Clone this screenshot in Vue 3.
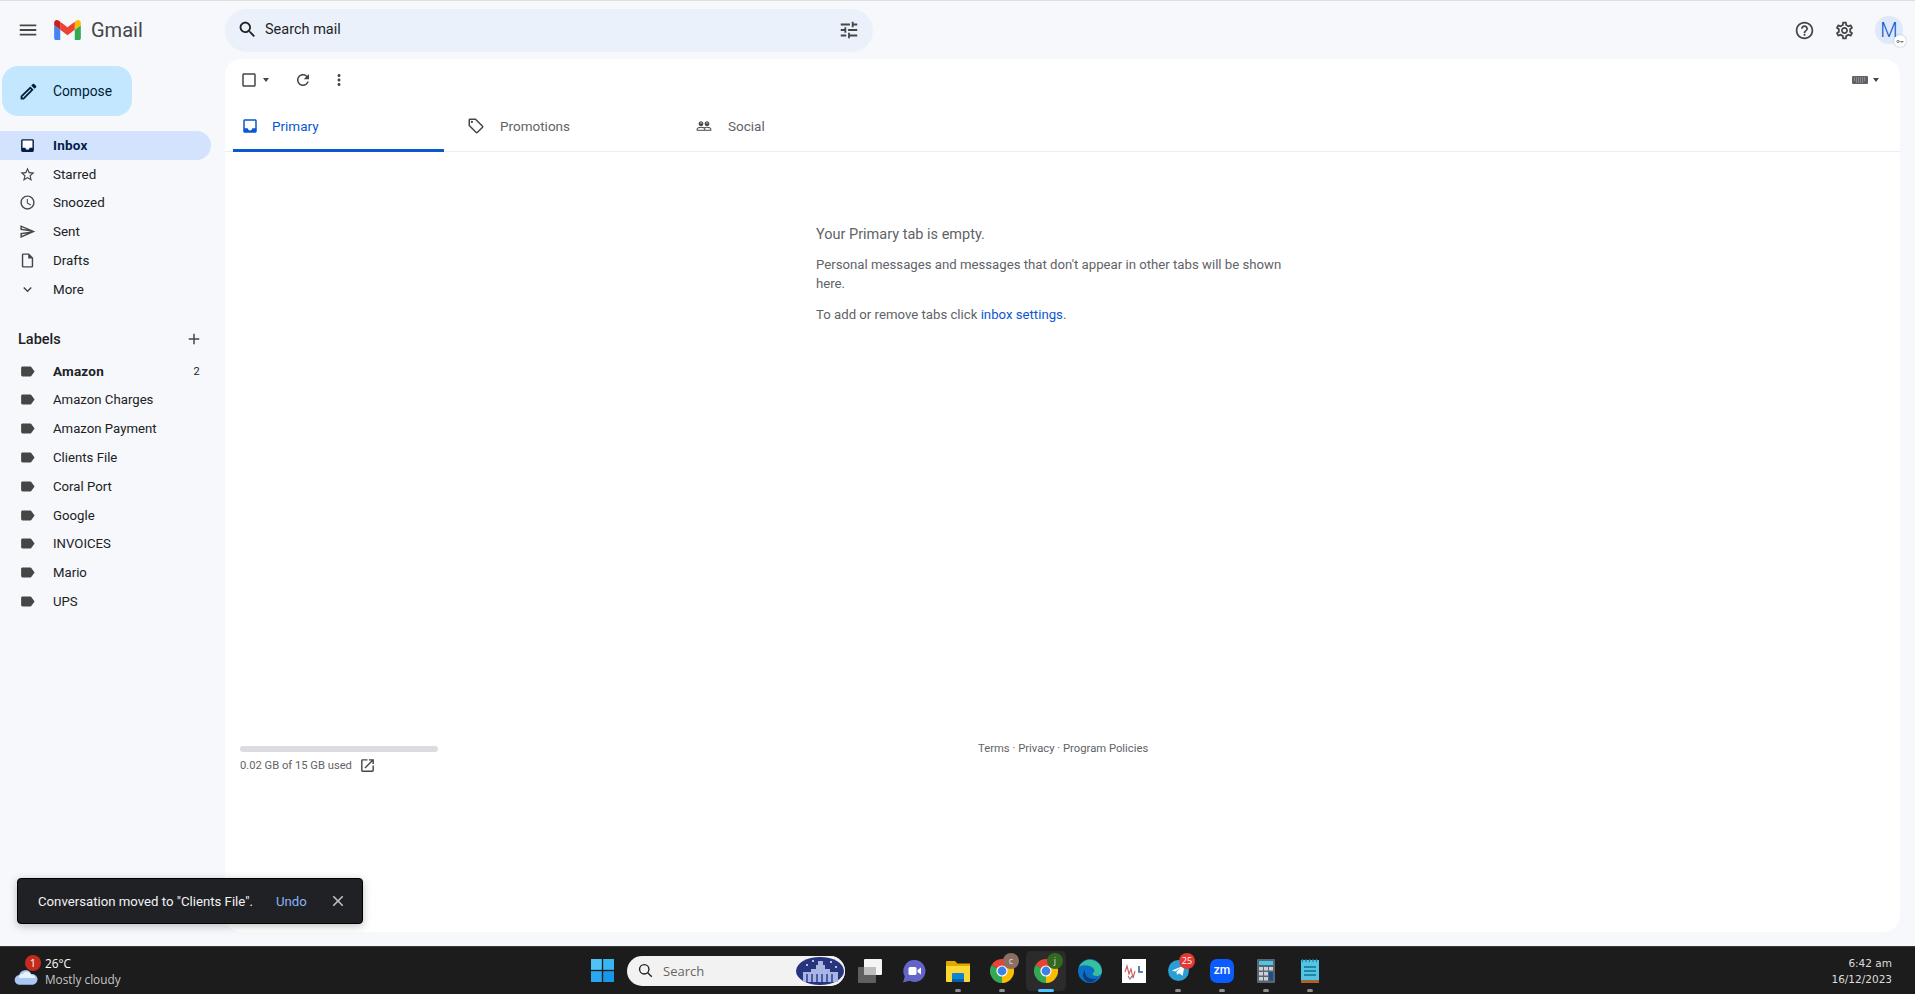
<template>
  <div class="page">
    <header class="topbar">
      <div class="brand">
        <svg class="menu-icon" viewBox="0 0 24 24"><path :d="icons.menu" /></svg>
        <svg class="logo" viewBox="52 42 88 66">
          <path fill="#4285f4" d="M58 108h14V74L52 59v43c0 3.32 2.69 6 6 6" />
          <path fill="#34a853" d="M120 108h14c3.32 0 6-2.69 6-6V59l-20 15" />
          <path fill="#fbbc04" d="M120 48v26l20-15v-8c0-7.42-8.47-11.65-14.4-7.2" />
          <path fill="#ea4335" d="M72 74V48l24 18 24-18v26L96 92" />
          <path fill="#c5221f" d="M52 51v8l20 15V48l-5.6-4.2c-5.94-4.45-14.4-.22-14.4 7.2" />
        </svg>
        <span class="wordmark">Gmail</span>
      </div>
      <div class="search">
        <svg class="search-icon" viewBox="0 0 24 24"><path :d="icons.search" /></svg>
        <span class="search-text">Search mail</span>
        <svg class="tune-icon" viewBox="0 0 24 24"><path :d="icons.tune" /></svg>
      </div>
      <div class="top-actions">
        <svg class="action-icon" viewBox="0 0 24 24"><path :d="icons.help" /></svg>
        <svg class="action-icon" viewBox="0 0 24 24"><path :d="icons.settings" /></svg>
        <div class="avatar">
          M
          <span class="key-badge">
            <svg viewBox="0 0 16 8"><circle cx="3.5" cy="4" r="2" fill="none" stroke="#444" stroke-width="1.2" /><path d="M5.5 3.4h8v1.2h-1v1.4h-1V4.6h-1V6h-1V4.6h-4z" fill="#444" /></svg>
          </span>
        </div>
      </div>
    </header>

    <div class="body">
      <aside class="sidebar">
        <button class="compose">
          <svg viewBox="0 0 24 24"><path :d="icons.edit" /></svg>
          <span>Compose</span>
        </button>
        <nav class="nav">
          <div v-for="item in navItems" :key="item.name" class="row" :class="{ active: item.active }">
            <svg class="row-icon" viewBox="0 0 24 24">
              <rect v-if="item.active" x="4" y="4" width="16" height="12" fill="#fff" />
              <path :d="icons[item.icon]" />
            </svg>
            <span>{{ item.name }}</span>
          </div>
        </nav>
        <div class="labels-head">
          <span>Labels</span>
          <svg viewBox="0 0 24 24"><path :d="icons.add" /></svg>
        </div>
        <div v-for="label in labels" :key="label.name" class="row label-row" :class="{ unread: label.count }">
          <svg class="row-icon" viewBox="0 0 24 24"><path :d="icons.label" /></svg>
          <span>{{ label.name }}</span>
          <span v-if="label.count" class="count">{{ label.count }}</span>
        </div>
      </aside>

      <main class="panel">
        <div class="toolbar">
          <svg class="tool-box" viewBox="0 0 24 24"><path :d="icons.checkbox" /></svg>
          <span class="caret"></span>
          <svg class="tool-refresh" viewBox="0 0 24 24"><path :d="icons.refresh" /></svg>
          <svg class="tool-more" viewBox="0 0 24 24"><path :d="icons.more" /></svg>
          <div class="input-tools">
            <svg class="keyboard" viewBox="0 0 16 8">
              <rect width="16" height="8" rx="1" fill="#5f6368" />
              <path d="M2 2h12M2 4h12M4 6h8" stroke="#c8c8c8" stroke-width=".8" stroke-dasharray="1 1" />
            </svg>
            <span class="caret"></span>
          </div>
        </div>

        <div class="tabs">
          <div class="tab tab-primary">
            <svg viewBox="0 0 24 24">
              <rect x="4" y="4" width="16" height="12" fill="#fff" />
              <path :d="icons.inbox" />
            </svg>
            <span>Primary</span>
          </div>
          <div class="tab tab-promo">
            <svg viewBox="0 0 24 24"><path :d="icons.tag" /></svg>
            <span>Promotions</span>
          </div>
          <div class="tab tab-social">
            <svg viewBox="0 0 24 24"><path :d="icons.people" /></svg>
            <span>Social</span>
          </div>
        </div>

        <section class="empty">
          <p class="empty-title">Your Primary tab is empty.</p>
          <p class="empty-desc">Personal messages and messages that don't appear in other tabs will be shown here.</p>
          <p class="empty-desc">To add or remove tabs click <a>inbox settings</a>.</p>
        </section>

        <footer class="panel-foot">
          <div class="storage">
            <div class="storage-bar"></div>
            <div class="storage-text">
              <span>0.02 GB of 15 GB used</span>
              <svg viewBox="0 0 24 24"><path :d="icons.open" /></svg>
            </div>
          </div>
          <div class="terms">Terms · Privacy · Program Policies</div>
        </footer>
      </main>
    </div>

    <footer class="taskbar">
      <div class="weather">
        <svg class="cloud" viewBox="0 0 26 20">
          <path fill="#a9c8f2" d="M6 19a5 5 0 0 1-.6-10 6.5 6.5 0 0 1 12.4-1A5.5 5.5 0 0 1 20 19z" />
          <path fill="#eaf2fd" d="M5 12a4 4 0 0 1 4-4 5 5 0 0 1 9 1c3 0 4 2 4 3z" />
        </svg>
        <span class="weather-badge">1</span>
        <div class="weather-text">
          <div class="temp">26°C</div>
          <div class="cond">Mostly cloudy</div>
        </div>
      </div>

      <div class="slot">
        <svg class="win" viewBox="0 0 24 24">
          <rect width="11.3" height="11.3" fill="#4fc3f7" />
          <rect x="12.7" width="11.3" height="11.3" fill="#38b6f4" />
          <rect y="12.7" width="11.3" height="11.3" fill="#29a8ef" />
          <rect x="12.7" y="12.7" width="11.3" height="11.3" fill="#1a96e8" />
        </svg>
      </div>

      <div class="task-search">
        <svg viewBox="0 0 24 24" fill="none" stroke="#222" stroke-width="2.2"><circle cx="10" cy="10" r="7.5" /><path d="M15.5 15.5L22 22" /></svg>
        <span>Search</span>
        <svg class="palace" viewBox="0 0 50 30">
          <rect width="50" height="30" rx="15" fill="#f2f2f2" />
          <ellipse cx="25" cy="15" rx="24" ry="14" fill="#27357e" />
          <path fill="#aab6e2" d="M8 26V16h8v-3h5V9h2V5h5v4h2v4h5v3h8v10z" />
          <path fill="#4a5bab" d="M11 18h2v8h-2zm5 0h2v8h-2zm5 0h2v8h-2zm5 0h2v8h-2zm5 0h2v8h-2zm5 0h2v8h-2z" />
          <g fill="#fff"><circle cx="12" cy="9" r=".9" /><circle cx="18" cy="5" r=".9" /><circle cx="36" cy="6" r=".9" /><circle cx="41" cy="11" r=".9" /></g>
        </svg>
      </div>

      <div class="slot">
        <svg class="tb-icon" viewBox="0 0 24 24">
          <rect y="8" width="18" height="16" rx="1" fill="#5f5f5f" />
          <rect x="6" width="18" height="16" rx="1" fill="#f4f4f4" />
          <rect x="6" y="8" width="12" height="8" fill="#bdbdbd" />
        </svg>
      </div>
      <div class="slot">
        <svg class="tb-icon" viewBox="0 0 24 24">
          <path fill="#6264c7" d="M12.5 1a11 11 0 1 1-5 20.8L1 23.5l1.8-6A11 11 0 0 1 12.5 1z" />
          <rect x="6.5" y="8" width="8" height="8" rx="1.5" fill="#fff" />
          <path fill="#fff" d="M15.5 11l3.5-2.5v7L15.5 13z" />
        </svg>
      </div>
      <div class="slot">
        <svg class="tb-icon" viewBox="0 0 24 24">
          <path fill="#e0a800" d="M0 3a1 1 0 0 1 1-1h8l2.5 2.5H24V9H0z" />
          <path fill="#fdd835" d="M0 7h24v15a1 1 0 0 1-1 1H1a1 1 0 0 1-1-1z" />
          <rect x="6" y="14" width="12" height="7" rx="1" fill="#0b84d8" />
          <rect x="6" y="20" width="12" height="3" fill="#0a5ea8" />
        </svg>
        <span class="run"></span>
      </div>
      <div class="slot">
        <svg class="tb-icon" viewBox="0 0 24 24">
          <path fill="#ea4335" d="M12 12L1.6 6A12 12 0 0 1 22.4 6z" />
          <path fill="#fbbc04" d="M12 12L22.4 6A12 12 0 0 1 12 24z" />
          <path fill="#34a853" d="M12 12L12 24A12 12 0 0 1 1.6 6z" />
          <circle cx="12" cy="12" r="5.6" fill="#fff" />
          <circle cx="12" cy="12" r="4.4" fill="#3f7fe8" />
        </svg>
        <span class="avatar-dot brown">c</span>
        <span class="run"></span>
      </div>
      <div class="slot current">
        <svg class="tb-icon" viewBox="0 0 24 24">
          <path fill="#ea4335" d="M12 12L1.6 6A12 12 0 0 1 22.4 6z" />
          <path fill="#fbbc04" d="M12 12L22.4 6A12 12 0 0 1 12 24z" />
          <path fill="#34a853" d="M12 12L12 24A12 12 0 0 1 1.6 6z" />
          <circle cx="12" cy="12" r="5.6" fill="#fff" />
          <circle cx="12" cy="12" r="4.4" fill="#3f7fe8" />
        </svg>
        <span class="avatar-dot green">j</span>
        <span class="run run-active"></span>
      </div>
      <div class="slot">
        <svg class="tb-icon" viewBox="0 0 24 24">
          <circle cx="12" cy="12" r="12" fill="#0b6fc2" />
          <path fill="#35c1a0" d="M1 8A12 12 0 0 1 24 12c0 3-2.5 5-5.5 5-2.5 0-4-1-4-2.5 2-1 2.5-3 1-5C13.5 7 6 4.5 1 8z" />
          <path fill="#0a3d80" d="M10 23C5 21 3.5 15 7 11c-1 5 3 9 8 9 2 0 3-.5 4-1-2 3-5 5-9 4z" />
        </svg>
      </div>
      <div class="slot">
        <svg class="tb-icon" viewBox="0 0 24 24">
          <rect width="24" height="24" fill="#fff" />
          <path d="M3 13l2-6 2 8 2-5 2 9 2-7" fill="none" stroke="#c9585a" stroke-width="1.1" />
          <path d="M6 17l2 3 2-3" fill="none" stroke="#777" stroke-width="1.1" />
          <path d="M17 7v6h4" fill="none" stroke="#2f5fa8" stroke-width="1.6" />
        </svg>
      </div>
      <div class="slot">
        <svg class="tb-icon tele" viewBox="0 0 24 24">
          <circle cx="12" cy="12" r="12" fill="#2a9fd6" />
          <path fill="#fff" d="M4.5 12L19 6l-2.3 12-4.2-3-2.2 2.2-.6-3.7 5.8-5-7.2 4.5z" />
        </svg>
        <span class="avatar-dot red">25</span>
        <span class="run"></span>
      </div>
      <div class="slot">
        <div class="zoom-app">zm</div>
        <span class="run"></span>
      </div>
      <div class="slot">
        <svg class="tb-icon narrow" viewBox="0 0 18 24">
          <rect width="18" height="24" rx="1" fill="#5a6570" />
          <rect x="2" y="2" width="14" height="4" fill="#49c6e8" />
          <g fill="#c8d0d8">
            <rect x="2" y="8" width="4" height="3.5" /><rect x="7" y="8" width="4" height="3.5" /><rect x="12" y="8" width="4" height="3.5" />
            <rect x="2" y="13" width="4" height="3.5" /><rect x="7" y="13" width="4" height="3.5" />
            <rect x="2" y="18" width="4" height="3.5" /><rect x="7" y="18" width="4" height="3.5" />
          </g>
          <rect x="12" y="13" width="4" height="8.5" fill="#1c4f8f" />
        </svg>
        <span class="run"></span>
      </div>
      <div class="slot">
        <svg class="tb-icon narrow" viewBox="0 0 18 24">
          <rect y="1" width="18" height="21" fill="#55c4e4" />
          <rect y="21" width="18" height="3" fill="#a8642a" />
          <path d="M1.5 0v3M5 0v3M8.5 0v3M12 0v3M15.5 0v3" stroke="#1e7f9e" stroke-width="1.2" />
          <path d="M3 8h12M3 12h12M3 16h12" stroke="#0f7192" stroke-width="1.6" />
        </svg>
        <span class="run"></span>
      </div>

      <div class="clock">
        <div>6:42 am</div>
        <div>16/12/2023</div>
      </div>
    </footer>

    <div class="toast">
      <span class="toast-text">Conversation moved to "Clients File".</span>
      <span class="toast-undo">Undo</span>
      <svg viewBox="0 0 24 24"><path :d="icons.close" /></svg>
    </div>
  </div>
</template>

<script setup>
const icons = {
  menu: 'M3 18h18v-2H3v2zm0-5h18v-2H3v2zm0-7v2h18V6H3z',
  search: 'M15.5 14h-.79l-.28-.27C15.41 12.59 16 11.11 16 9.5 16 5.91 13.09 3 9.5 3S3 5.91 3 9.5 5.91 16 9.5 16c1.61 0 3.09-.59 4.23-1.57l.27.28v.79l5 4.99L20.49 19l-4.99-5zm-6 0C7.01 14 5 11.99 5 9.5S7.01 5 9.5 5 14 7.01 14 9.5 11.99 14 9.5 14z',
  tune: 'M3 17v2h6v-2H3zM3 5v2h10V5H3zm10 16v-2h8v-2h-8v-2h-2v6h2zM7 9v2H3v2h4v2h2V9H7zm14 4v-2H11v2h10zm-6-4h2V7h4V5h-4V3h-2v6z',
  help: 'M11 18h2v-2h-2v2zm1-16C6.48 2 2 6.48 2 12s4.48 10 10 10 10-4.48 10-10S17.52 2 12 2zm0 18c-4.41 0-8-3.59-8-8s3.59-8 8-8 8 3.59 8 8-3.59 8-8 8zm0-14c-2.21 0-4 1.79-4 4h2c0-1.1.9-2 2-2s2 .9 2 2c0 2-3 1.75-3 5h2c0-2.25 3-2.5 3-5 0-2.21-1.79-4-4-4z',
  settings: 'M19.43 12.98c.04-.32.07-.64.07-.98 0-.34-.03-.66-.07-.98l2.11-1.65c.19-.15.24-.42.12-.64l-2-3.46c-.09-.16-.26-.25-.44-.25-.06 0-.12.01-.17.03l-2.49 1c-.52-.4-1.08-.73-1.69-.98l-.38-2.65C14.46 2.18 14.25 2 14 2h-4c-.25 0-.46.18-.49.42l-.38 2.65c-.61.25-1.17.59-1.69.98l-2.49-1c-.06-.02-.12-.03-.18-.03-.17 0-.34.09-.43.25l-2 3.46c-.13.22-.07.49.12.64l2.11 1.65c-.04.32-.07.65-.07.98 0 .33.03.66.07.98l-2.11 1.65c-.19.15-.24.42-.12.64l2 3.46c.09.16.26.25.44.25.06 0 .12-.01.17-.03l2.49-1c.52.4 1.08.73 1.69.98l.38 2.65c.03.24.24.42.49.42h4c.25 0 .46-.18.49-.42l.38-2.65c.61-.25 1.17-.59 1.69-.98l2.49 1c.06.02.12.03.18.03.17 0 .34-.09.43-.25l2-3.46c.12-.22.07-.49-.12-.64l-2.11-1.65zm-1.98-1.71c.04.31.05.52.05.73 0 .21-.02.43-.05.73l-.14 1.13.89.7 1.08.84-.7 1.21-1.27-.51-1.04-.42-.9.68c-.43.32-.84.56-1.25.73l-1.06.43-.16 1.13-.2 1.35h-1.4l-.19-1.35-.16-1.13-1.06-.43c-.43-.18-.83-.41-1.23-.71l-.91-.7-1.06.43-1.27.51-.7-1.21 1.08-.84.89-.7-.14-1.13c-.03-.31-.05-.54-.05-.74s.02-.43.05-.73l.14-1.13-.89-.7-1.08-.84.7-1.21 1.27.51 1.04.42.9-.68c.43-.32.84-.56 1.25-.73l1.06-.43.16-1.13.2-1.35h1.39l.19 1.35.16 1.13 1.06.43c.43.18.83.41 1.23.71l.91.7 1.06-.43 1.27-.51.7 1.21-1.07.85-.89.7.14 1.13zM12 8c-2.21 0-4 1.79-4 4s1.79 4 4 4 4-1.79 4-4-1.79-4-4-4zm0 6c-1.1 0-2-.9-2-2s.9-2 2-2 2 .9 2 2-.9 2-2 2z',
  edit: 'M14.06 9.02l.92.92L5.92 19H5v-.92l9.06-9.06M17.66 3c-.25 0-.51.1-.7.29l-1.83 1.83 3.75 3.75 1.83-1.83c.39-.39.39-1.02 0-1.41l-2.34-2.34c-.2-.2-.45-.29-.71-.29zm-3.6 3.19L3 17.25V21h3.75L17.81 9.94l-3.75-3.75z',
  inbox: 'M19 3H5c-1.1 0-2 .9-2 2v14c0 1.1.9 2 2 2h14c1.1 0 2-.9 2-2V5c0-1.1-.9-2-2-2zm0 12h-4c0 1.66-1.35 3-3 3s-3-1.34-3-3H5V5h14v10z',
  star: 'M22 9.24l-7.19-.62L12 2 9.19 8.63 2 9.24l5.46 4.73L5.82 21 12 17.27 18.18 21l-1.63-7.03L22 9.24zM12 15.4l-3.76 2.27 1-4.28-3.32-2.88 4.38-.38L12 6.1l1.71 4.04 4.38.38-3.32 2.88 1 4.28L12 15.4z',
  clock: 'M11.99 2C6.47 2 2 6.48 2 12s4.47 10 9.99 10C17.52 22 22 17.52 22 12S17.52 2 11.99 2zM12 20c-4.42 0-8-3.58-8-8s3.58-8 8-8 8 3.58 8 8-3.58 8-8 8zm.5-13H11v6l5.25 3.15.75-1.23-4.5-2.67z',
  send: 'M4.01 6.03l7.51 3.22-7.52-1 .01-2.22m7.5 8.72L4 17.97v-2.22l7.51-1M2.01 3L2 10l15 2-15 2 .01 7L23 12 2.01 3z',
  draft: 'M14 2H6c-1.1 0-1.99.9-1.99 2L4 20c0 1.1.89 2 1.99 2H18c1.1 0 2-.9 2-2V8l-6-6zm4 18H6V4h7v5h5v11z',
  expand: 'M16.59 8.59L12 13.17 7.41 8.59 6 10l6 6 6-6z',
  add: 'M19 13h-6v6h-2v-6H5v-2h6V5h2v6h6v2z',
  label: 'M17.63 5.84C17.27 5.33 16.67 5 16 5L5 5.01C3.9 5.01 3 5.9 3 7v10c0 1.1.9 1.99 2 1.99L16 19c.67 0 1.27-.33 1.63-.84L22 12l-4.37-6.16z',
  checkbox: 'M19 5v14H5V5h14m0-2H5c-1.1 0-2 .9-2 2v14c0 1.1.9 2 2 2h14c1.1 0 2-.9 2-2V5c0-1.1-.9-2-2-2z',
  refresh: 'M17.65 6.35C16.2 4.9 14.21 4 12 4c-4.42 0-7.99 3.58-7.99 8s3.57 8 7.99 8c3.73 0 6.84-2.55 7.73-6h-2.08c-.82 2.33-3.04 4-5.65 4-3.31 0-6-2.69-6-6s2.69-6 6-6c1.66 0 3.14.69 4.22 1.78L13 11h7V4l-2.35 2.35z',
  more: 'M12 8c1.1 0 2-.9 2-2s-.9-2-2-2-2 .9-2 2 .9 2 2 2zm0 2c-1.1 0-2 .9-2 2s.9 2 2 2 2-.9 2-2-.9-2-2-2zm0 6c-1.1 0-2 .9-2 2s.9 2 2 2 2-.9 2-2-.9-2-2-2z',
  tag: 'M21.41 11.58l-9-9C12.05 2.22 11.55 2 11 2H4c-1.1 0-2 .9-2 2v7c0 .55.22 1.05.59 1.42l9 9c.36.36.86.58 1.41.58s1.05-.22 1.41-.59l7-7c.37-.36.59-.86.59-1.41s-.23-1.06-.59-1.42zM13 20.01L4 11V4h7v-.01l9 8.99-7 7.03zM6.5 5a1.5 1.5 0 1 0 0 3 1.5 1.5 0 1 0 0-3z',
  people: 'M16.5 13c-1.2 0-3.07.34-4.5 1-1.43-.67-3.3-1-4.5-1C5.33 13 1 14.08 1 16.25V19h22v-2.75c0-2.17-4.33-3.25-6.5-3.25zm-4 4.5h-10v-1.25c0-.54 2.56-1.75 5-1.75s5 1.21 5 1.75v1.25zm9 0H14v-1.25c0-.46-.2-.86-.52-1.22.88-.3 1.96-.53 3.02-.53 2.44 0 5 1.21 5 1.75v1.25zM7.5 12c1.93 0 3.5-1.57 3.5-3.5S9.43 5 7.5 5 4 6.57 4 8.5 5.57 12 7.5 12zm0-5.5c.55 0 1 .45 1 1s-.45 1-1 1-1-.45-1-1 .45-1 1-1zm9 5.5c1.93 0 3.5-1.57 3.5-3.5S18.43 5 16.5 5 13 6.57 13 8.5s1.57 3.5 3.5 3.5zm0-5.5c.55 0 1 .45 1 1s-.45 1-1 1-1-.45-1-1 .45-1 1-1z',
  open: 'M19 19H5V5h7V3H5c-1.11 0-2 .9-2 2v14c0 1.1.89 2 2 2h14c1.1 0 2-.9 2-2v-7h-2v7zM14 3v2h3.59l-9.83 9.83 1.41 1.41L19 6.41V10h2V3h-7z',
  close: 'M19 6.41L17.59 5 12 10.59 6.41 5 5 6.41 10.59 12 5 17.59 6.41 19 12 13.41 17.59 19 19 17.59 13.41 12z'
}

const navItems = [
  { name: 'Inbox', icon: 'inbox', active: true },
  { name: 'Starred', icon: 'star' },
  { name: 'Snoozed', icon: 'clock' },
  { name: 'Sent', icon: 'send' },
  { name: 'Drafts', icon: 'draft' },
  { name: 'More', icon: 'expand' }
]

const labels = [
  { name: 'Amazon', count: 2 },
  { name: 'Amazon Charges' },
  { name: 'Amazon Payment' },
  { name: 'Clients File' },
  { name: 'Coral Port' },
  { name: 'Google' },
  { name: 'INVOICES' },
  { name: 'Mario' },
  { name: 'UPS' }
]
</script>

<style>
html, body {
  margin: 0;
  overflow: hidden;
}
</style>

<style scoped>
.page {
  position: relative;
  display: flex;
  flex-direction: column;
  width: 1915px;
  height: 994px;
  box-sizing: border-box;
  border-top: 1px solid #dcdee0;
  overflow: hidden;
  background: #f6f8fc;
  font-family: Roboto, "Liberation Sans", sans-serif;
  color: #202124;
}
svg {
  display: block;
  flex: none;
}

/* top bar */
.topbar {
  display: flex;
  align-items: center;
  height: 58px;
  flex: none;
}
.brand {
  display: flex;
  align-items: center;
  width: 225px;
  padding-left: 17px;
  box-sizing: border-box;
}
.menu-icon {
  width: 22px;
  height: 22px;
  fill: #444746;
}
.logo {
  width: 27px;
  height: 20px;
  margin-left: 15px;
}
.wordmark {
  margin-left: 10px;
  font-size: 20px;
  color: #444746;
}
.search {
  display: flex;
  align-items: center;
  width: 648px;
  height: 43px;
  box-sizing: border-box;
  padding: 0 13px 1px 12px;
  border-radius: 22px;
  background: #eaf1fb;
}
.search-icon {
  width: 21px;
  height: 21px;
  fill: #1f1f1f;
}
.search-text {
  margin-left: 7px;
  font-size: 14.5px;
  color: #1f1f1f;
}
.tune-icon {
  width: 22px;
  height: 22px;
  margin-left: auto;
  fill: #444746;
}
.top-actions {
  display: flex;
  align-items: center;
  margin-left: auto;
  padding-right: 12px;
}
.action-icon {
  width: 21px;
  height: 21px;
  margin-right: 19px;
  fill: #444746;
}
.avatar {
  position: relative;
  width: 28px;
  height: 28px;
  margin-left: 1px;
  border-radius: 50%;
  background: #dfe9fa;
  color: #0b57d0;
  font-size: 20px;
  font-weight: 300;
  line-height: 28px;
  text-align: center;
}
.key-badge {
  position: absolute;
  right: -3px;
  bottom: -3px;
  display: flex;
  align-items: center;
  justify-content: center;
  width: 12px;
  height: 12px;
  border-radius: 50%;
  background: #fff;
  box-shadow: 0 0 2px rgba(0, 0, 0, .3);
}
.key-badge svg {
  width: 9px;
  height: 5px;
}

/* sidebar */
.body {
  display: flex;
  flex: 1;
  min-height: 0;
}
.sidebar {
  width: 225px;
  flex: none;
  padding-top: 7px;
  box-sizing: border-box;
}
.compose {
  display: flex;
  align-items: center;
  width: 130px;
  height: 50px;
  margin: 0 0 15px 2px;
  padding: 0 0 0 16px;
  border: 0;
  border-radius: 16px;
  background: #c2e7ff;
  color: #001d35;
  font-family: inherit;
  font-size: 13.8px;
}
.compose svg {
  width: 21px;
  height: 21px;
  margin-right: 14px;
  fill: #001d35;
}
.row {
  display: flex;
  align-items: center;
  width: 211px;
  height: 28.8px;
  padding-left: 18.5px;
  box-sizing: border-box;
  border-radius: 0 15px 15px 0;
  font-size: 13.4px;
  color: #202124;
}
.row-icon {
  width: 17px;
  height: 17px;
  margin-right: 17.5px;
  fill: #444746;
}
.row.active {
  background: #d3e3fd;
  font-size: 13.5px;
  font-weight: 700;
  letter-spacing: .2px;
  color: #041e49;
}
.row.active .row-icon {
  fill: #041e49;
}
.labels-head {
  display: flex;
  align-items: center;
  justify-content: space-between;
  width: 211px;
  height: 33px;
  margin: 19px 0 1px;
  padding: 0 8px 0 18px;
  box-sizing: border-box;
  font-size: 14.5px;
  font-weight: 500;
  color: #1f1f1f;
}
.labels-head svg {
  width: 18px;
  height: 18px;
  fill: #444746;
}
.label-row {
  font-size: 13.2px;
}
.label-row.unread {
  font-size: 13.5px;
  font-weight: 700;
  letter-spacing: .2px;
}
.count {
  margin-left: auto;
  padding-right: 11px;
  font-size: 11px;
  font-weight: 400;
}

/* main panel */
.panel {
  display: flex;
  flex-direction: column;
  width: 1675px;
  height: 873px;
  border-radius: 16px;
  background: #fff;
}
.toolbar {
  display: flex;
  align-items: center;
  height: 44px;
  flex: none;
  box-sizing: border-box;
  padding: 0 21px 3px 15px;
}
.tool-box {
  width: 18px;
  height: 18px;
  fill: #444746;
}
.caret {
  width: 0;
  height: 0;
  margin-left: 5px;
  border: 3.5px solid transparent;
  border-top: 4px solid #444746;
  border-bottom: 0;
}
.tool-refresh {
  width: 18px;
  height: 18px;
  margin-left: 25px;
  fill: #444746;
}
.tool-more {
  width: 18px;
  height: 18px;
  margin-left: 18px;
  fill: #444746;
}
.input-tools {
  display: flex;
  align-items: center;
  margin-left: auto;
}
.keyboard {
  width: 16px;
  height: 8px;
  margin-top: 1px;
}
.tabs {
  display: flex;
  height: 49px;
  flex: none;
  padding-left: 8px;
  box-sizing: border-box;
  border-bottom: 1px solid #eceff1;
}
.tab {
  display: flex;
  align-items: center;
  height: 46px;
  box-sizing: border-box;
  padding-bottom: 1px;
  font-size: 13.5px;
  color: #5f6368;
}
.tab svg {
  width: 18px;
  height: 18px;
  fill: #444746;
}
.tab-primary {
  width: 211px;
  height: 49px;
  padding-left: 8px;
  border-bottom: 3px solid #0b57d0;
  border-radius: 3px 3px 0 0;
  color: #0b57d0;
}
.tab-primary svg {
  margin-right: 13px;
  fill: #0b57d0;
}
.tab-promo {
  width: 228px;
  padding-left: 23px;
}
.tab-promo svg {
  margin-right: 15px;
}
.tab-social {
  padding-left: 23.5px;
}
.tab-social svg {
  width: 16px;
  height: 16px;
  margin-right: 16.5px;
}
.empty {
  width: 486px;
  margin-left: 591px;
  padding-top: 73px;
  font-size: 13.2px;
  line-height: 19px;
  color: #5f6368;
}
.empty p {
  margin: 0 0 12px;
}
.empty .empty-title {
  margin-bottom: 11px;
  font-size: 14.5px;
}
.empty a {
  color: #0b57d0;
}
.panel-foot {
  display: flex;
  align-items: flex-start;
  margin-top: 410px;
  padding-left: 15px;
}
.storage {
  width: 198px;
}
.storage-bar {
  height: 6px;
  border-radius: 3px;
  background: #dadce0;
}
.storage-text {
  display: flex;
  align-items: center;
  margin-top: 5px;
  font-size: 11.2px;
  color: #5f6368;
}
.storage-text svg {
  width: 17px;
  height: 17px;
  margin-left: 7px;
  fill: #444746;
}
.terms {
  margin: -4px 0 0 540px;
  font-size: 11.25px;
  color: #5f6368;
}

/* taskbar */
.taskbar {
  display: flex;
  align-items: center;
  height: 48px;
  flex: none;
  box-sizing: border-box;
  border-top: 1px solid #3b3b3d;
  background: #1c1c1c;
  font-family: "Open Sans", "Noto Sans", sans-serif;
}
.weather {
  position: relative;
  display: flex;
  align-items: center;
  width: 580px;
  flex: none;
  padding-left: 14px;
  box-sizing: border-box;
}
.cloud {
  width: 25px;
  height: 20px;
  margin-top: 10px;
}
.weather-badge {
  position: absolute;
  left: 25px;
  top: 0;
  width: 16px;
  height: 16px;
  border-radius: 50%;
  background: #c42b1c;
  color: #fff;
  font-size: 11px;
  line-height: 16px;
  text-align: center;
}
.weather-text {
  margin-left: 6px;
  font-size: 11.8px;
  line-height: 16px;
}
.temp {
  color: #fff;
}
.cond {
  color: #c5c5c5;
}
.slot {
  position: relative;
  display: flex;
  align-items: center;
  justify-content: center;
  width: 44px;
  height: 40px;
  flex: none;
  box-sizing: border-box;
}
.slot.current {
  border-left: 2px solid transparent;
  border-right: 2px solid transparent;
  background: #2b2b2b;
  background-clip: padding-box;
  border-radius: 6px;
}
.win {
  width: 23px;
  height: 23px;
}
.tb-icon {
  width: 24px;
  height: 24px;
}
.tb-icon.narrow {
  width: 18px;
}
.tb-icon.tele {
  width: 21px;
  height: 21px;
}
.task-search {
  display: flex;
  align-items: center;
  width: 218px;
  height: 30px;
  margin: 0 3px;
  flex: none;
  box-sizing: border-box;
  padding-left: 11px;
  border-radius: 15px;
  background: #f2f2f2;
  font-size: 13px;
  color: #666;
}
.task-search > svg:first-child {
  width: 15px;
  height: 15px;
}
.task-search span {
  margin-left: 10px;
}
.palace {
  width: 50px;
  height: 30px;
  margin-left: auto;
}
.run {
  position: absolute;
  left: 19px;
  bottom: -1px;
  width: 6px;
  height: 3px;
  border-radius: 2px;
  background: #8f8f8f;
}
.run-active {
  left: 12px;
  width: 16px;
  background: #4cc2ff;
}
.avatar-dot {
  position: absolute;
  left: 23px;
  top: 2px;
  width: 16px;
  height: 16px;
  border-radius: 50%;
  color: #ddd;
  font-size: 9px;
  line-height: 16px;
  text-align: center;
}
.avatar-dot.brown {
  background: #8d6e63;
}
.avatar-dot.green {
  left: 21px;
  background: #33691e;
}
.avatar-dot.red {
  background: #e53935;
  color: #fff;
}
.zoom-app {
  width: 24px;
  height: 24px;
  border-radius: 7px;
  background: #0b5cff;
  color: #fff;
  font-family: Roboto, sans-serif;
  font-size: 12px;
  font-weight: 500;
  line-height: 23px;
  text-align: center;
}
.clock {
  margin-left: auto;
  padding-right: 23px;
  font-family: "DejaVu Sans", sans-serif;
  font-size: 10.5px;
  line-height: 16px;
  color: #dcdcdc;
  text-align: right;
}

/* toast */
.toast {
  position: absolute;
  left: 17px;
  top: 877px;
  display: flex;
  align-items: center;
  width: 346px;
  height: 46px;
  box-sizing: border-box;
  padding-left: 20px;
  border: 1px solid #000;
  border-radius: 4px;
  background: #202124;
  box-shadow: 0 2px 8px rgba(0, 0, 0, .25);
  font-size: 13.2px;
  color: #f1f3f4;
}
.toast-undo {
  margin-left: 23px;
  color: #8ab4f8;
}
.toast svg {
  width: 18px;
  height: 18px;
  margin-left: 22px;
  fill: #c4c7c5;
}
</style>
